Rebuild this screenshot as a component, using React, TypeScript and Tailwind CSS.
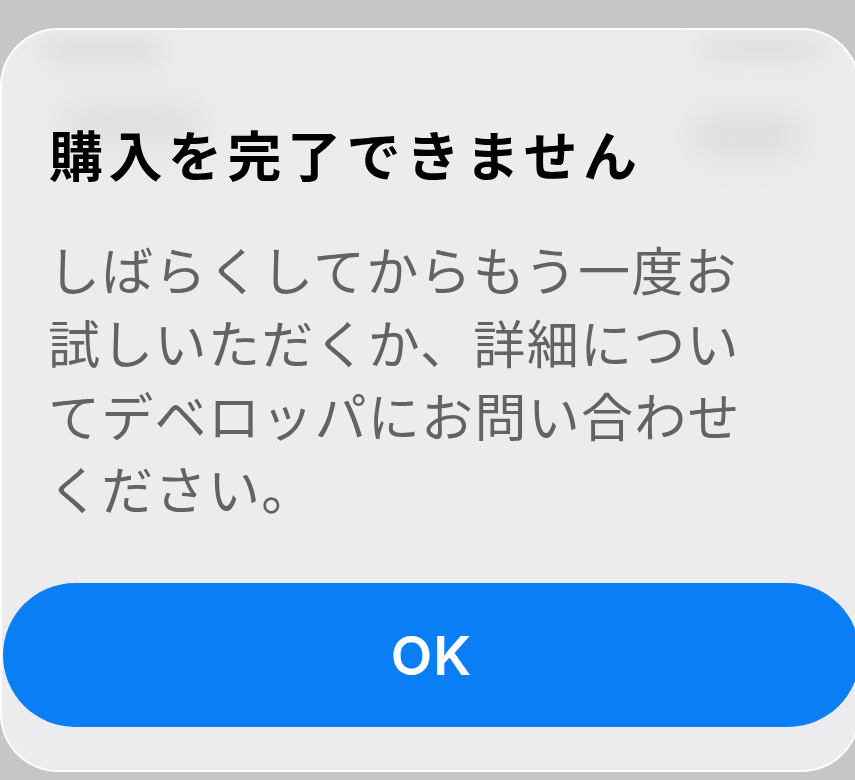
import React from 'react'

const jp = { fontFamily: '"Noto Sans CJK JP", "Noto Sans", sans-serif' }

export default function App() {
    return (
        <div className='w-[855px] h-[780px] overflow-hidden bg-[#c6c6c6] pt-[28px]' style={jp}>
            <div className='relative w-[860px] h-[744px] rounded-[58px] border-2 border-white/90 bg-[#ececee] overflow-hidden'>
                {/* blurred content behind the sheet */}
                <div className='absolute left-[40px] top-[10px] w-[120px] h-[20px] rounded-full bg-[#dadadc] blur-md'></div>
                <div className='absolute left-[60px] top-[75px] w-[140px] h-[40px] rounded-full bg-[#dedee0] blur-lg'></div>
                <div className='absolute left-[690px] top-[85px] w-[110px] h-[40px] rounded-full bg-[#dcdcde] blur-lg'></div>
                <div className='absolute left-[700px] top-[10px] w-[120px] h-[20px] rounded-full bg-[#dcdcde] blur-md'></div>

                <div className='relative flex flex-col pt-[93px]'>
                    <h1 className='pl-[47px] text-[54px] leading-[62px] font-bold text-black tracking-[5.5px]'>
                        購入を完了できません
                    </h1>
                    <p className='mt-[47px] pl-[46px] w-[800px] text-[52px] leading-[73px] text-[#636366] tracking-[1.3px]'>
                        しばらくしてからもう一度お<br />
                        試しいただくか、詳細につい<br />
                        てデベロッパにお問い合わせ<br />
                        ください。
                    </p>
                    <button className='mt-[59px] ml-[1px] w-[857px] h-[144px] rounded-[72px] bg-[#0a7ff5] text-white text-[54px] font-semibold tracking-[1px] flex items-center justify-center' style={{ fontFamily: 'Inter, "Noto Sans", sans-serif' }}>
                        OK
                    </button>
                </div>
            </div>
        </div>
    )
}
